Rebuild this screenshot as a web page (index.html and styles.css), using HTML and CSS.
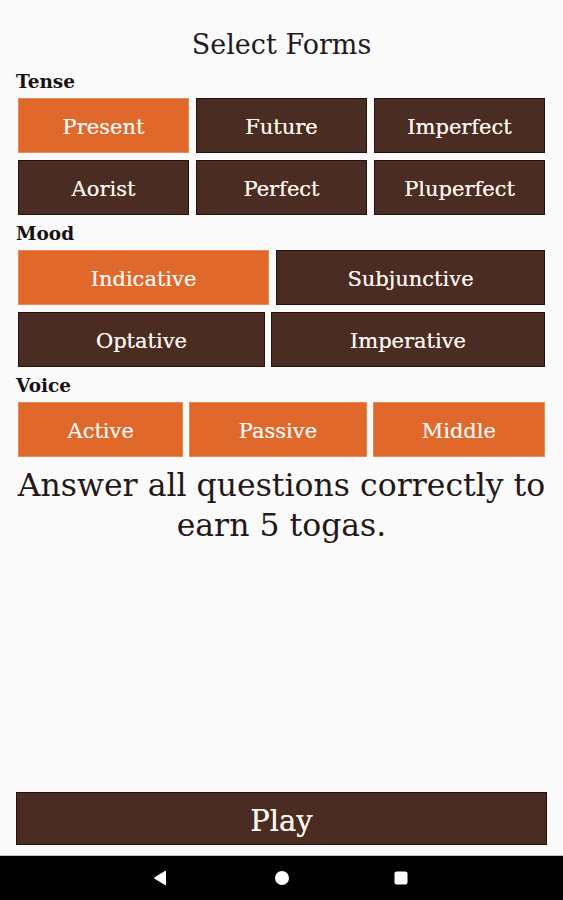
FILE: index.html
```html
<!DOCTYPE html>
<html lang="en">
<head>
<meta charset="utf-8">
<title>Select Forms</title>
<link rel="stylesheet" href="styles.css">
</head>
<body>
<div class="screen">
  <main class="content">
    <h1 class="title">Select Forms</h1>

    <div class="label">Tense</div>
    <div class="grid grid-tense">
      <div class="btn on">Present</div>
      <div class="btn">Future</div>
      <div class="btn">Imperfect</div>
      <div class="btn">Aorist</div>
      <div class="btn">Perfect</div>
      <div class="btn">Pluperfect</div>
    </div>

    <div class="label">Mood</div>
    <div class="rows">
      <div class="grid grid-mood1">
        <div class="btn on">Indicative</div>
        <div class="btn">Subjunctive</div>
      </div>
      <div class="grid grid-mood2">
        <div class="btn">Optative</div>
        <div class="btn">Imperative</div>
      </div>
    </div>

    <div class="label">Voice</div>
    <div class="grid grid-voice">
      <div class="btn on">Active</div>
      <div class="btn on">Passive</div>
      <div class="btn on">Middle</div>
    </div>

    <p class="info">Answer all questions correctly to earn 5 togas.</p>

    <div class="play">Play</div>
  </main>
  <nav class="navbar">
    <span class="nav-icon nav-back">
      <svg width="14" height="16" viewBox="0 0 14 16"><path d="M13 1.5 L13 14.5 Q13 15.5 12 15 L1.5 8.8 Q0.8 8 1.5 7.2 L12 1 Q13 0.5 13 1.5 Z" fill="#fff"/></svg>
    </span>
    <span class="nav-icon">
      <svg width="16" height="16" viewBox="0 0 16 16"><circle cx="8" cy="8" r="7" fill="#fff"/></svg>
    </span>
    <span class="nav-icon nav-recent">
      <svg width="16" height="16" viewBox="0 0 16 16"><rect x="1.5" y="1.5" width="13" height="13" rx="2" fill="#fff"/></svg>
    </span>
  </nav>
</div>
</body>
</html>
```

FILE: styles.css
```css
* { box-sizing: border-box; }
html, body {
  margin: 0;
  padding: 0;
  background: #fafafa;
}
body {
  font-family: "DejaVu Serif", "Liberation Serif", serif;
  color: #1c1414;
}
.screen {
  width: 563px;
  height: 900px;
  display: flex;
  flex-direction: column;
}
.content {
  flex: 1;
  display: flex;
  flex-direction: column;
  padding: 27px 18px 0 18px;
}
.title {
  margin: 0;
  height: 36px;
  line-height: 36px;
  text-align: center;
  font-weight: normal;
  font-size: 27px;
  color: #241a1a;
}
.label {
  margin: 8px 0 5px -2px;
  height: 22px;
  line-height: 22px;
  font-size: 18.5px;
  font-weight: bold;
  color: #1a1212;
}
.rows {
  display: flex;
  flex-direction: column;
  gap: 7px;
}
.grid {
  display: grid;
  gap: 7px;
}
.grid-tense { grid-template-columns: 1fr 1fr 1fr; }
.grid-mood1 { grid-template-columns: 251fr 269fr; }
.grid-mood2 { grid-template-columns: 247fr 274fr; gap: 6px; }
.grid-voice { grid-template-columns: 165fr 177fr 172fr; gap: 6px; }
.btn {
  height: 55px;
  padding-top: 2px;
  display: flex;
  align-items: center;
  justify-content: center;
  background: #4a2c22;
  border: 1px solid #2a100b;
  color: #fbf3ee;
  font-size: 21px;
  text-shadow: 0 0 0.6px #fbf3ee;
}
.btn.on {
  background: #e0682b;
  border-color: #e98a52;
}
.info {
  margin: 8px -8px 0 -8px;
  text-align: center;
  font-size: 31.5px;
  line-height: 40px;
  color: #241818;
}
.play {
  margin: auto -2px 10px -2px;
  height: 53px;
  padding-top: 4px;
  display: flex;
  align-items: center;
  justify-content: center;
  background: #4a2c22;
  border: 1px solid #2a0e0a;
  color: #fbf3ee;
  font-size: 29px;
  text-shadow: 0 0 0.6px #fbf3ee;
}
.navbar {
  height: 45px;
  background: #000;
  border-top: 1px solid #c0c0c0;
  display: flex;
  align-items: center;
  justify-content: center;
  gap: 96px;
}
.nav-icon {
  width: 24px;
  height: 24px;
  display: flex;
  align-items: center;
  justify-content: center;
}
.nav-back { transform: translateX(-2px); }
.nav-recent { transform: translateX(-1px); }
```
